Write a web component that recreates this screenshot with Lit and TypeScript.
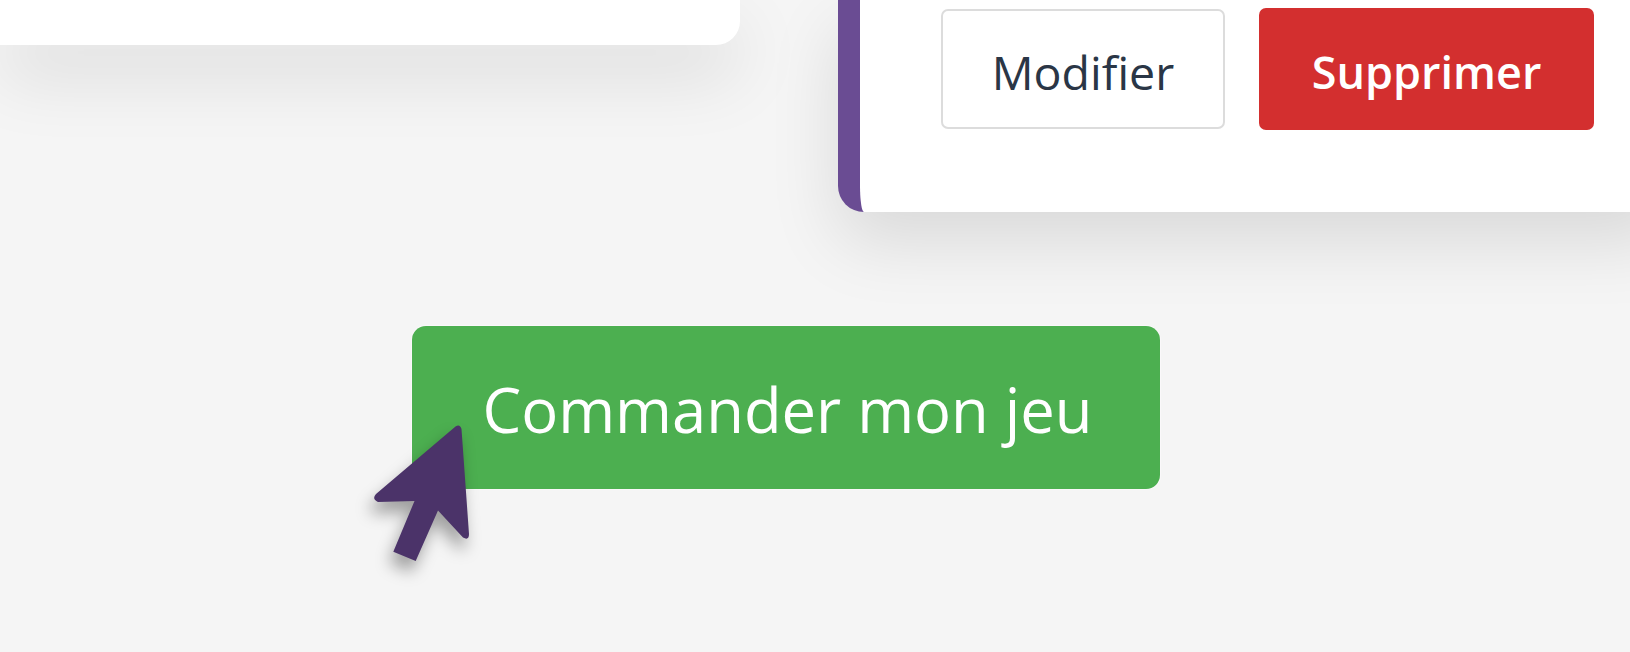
import { LitElement, html, css } from "lit";
import { customElement } from "lit/decorators.js";

@customElement("app-root")
export class AppRoot extends LitElement {
  static styles = css`
    :host {
      display: block;
      position: relative;
      width: 1630px;
      height: 652px;
      overflow: hidden;
      background: #f5f5f5;
      font-family: "Open Sans", "Noto Sans", sans-serif;
    }
    .top {
      display: grid;
      grid-template-columns: 740px 1fr;
      column-gap: 98px;
      align-items: start;
      margin-right: -40px;
    }
    .card {
      background: #fff;
      box-shadow: 0 30px 70px rgba(0, 0, 0, 0.115);
    }
    .left {
      height: 45px;
      border-bottom-right-radius: 24px;
    }
    .right {
      box-sizing: border-box;
      height: 212px;
      border-left: 22px solid #6a4c93;
      border-bottom-left-radius: 26px;
      padding: 8px 0 0 81px;
      display: flex;
      align-items: flex-start;
      gap: 34px;
    }
    .btn {
      box-sizing: border-box;
      display: flex;
      align-items: center;
      justify-content: center;
      font-size: 46.5px;
      border-radius: 7px;
      height: 122px;
      padding-top: 5px;
      white-space: nowrap;
    }
    .edit {
      width: 284px;
      margin-top: 1px;
      height: 120px;
      border: 2px solid #dcdcdc;
      background: #fff;
      color: #2a3646;
      font-weight: 500;
    }
    .del {
      width: 335px;
      background: #d32f2f;
      color: #fff;
      font-size: 45px;
      font-weight: 600;
    }
    .order {
      box-sizing: border-box;
      width: 748px;
      height: 163px;
      margin: 114px 0 0 412px;
      display: flex;
      align-items: center;
      justify-content: center;
      background: #4caf50;
      color: #fff;
      border-radius: 14px;
      font-size: 61.5px;
      font-weight: 500;
      padding: 2px 0 0 3px;
      box-shadow: 0 0 0 1px #faf8fa;
      white-space: nowrap;
    }
    .cursor {
      position: absolute;
      left: 0;
      top: 0;
      filter: drop-shadow(-4px 11px 8px rgba(0, 0, 0, 0.35));
    }
  `;

  render() {
    return html`
      <div class="top">
        <div class="card left"></div>
        <div class="card right">
          <div class="btn edit"><span>Modifier</span></div>
          <div class="btn del"><span>Supprimer</span></div>
        </div>
      </div>
      <div class="order"><span>Commander mon jeu</span></div>
      <svg class="cursor" width="1630" height="652" viewBox="0 0 1630 652">
        <path
          d="M455.5 426.5 Q460 423.5 461.5 429 L469 534 Q469 541 463 537.5 L438 510.5 L415.7 561 L393.3 551.7 L414.5 501 L378 502 Q371.5 499 376 494 Z"
          fill="#4b3369"
        />
      </svg>
    `;
  }
}
